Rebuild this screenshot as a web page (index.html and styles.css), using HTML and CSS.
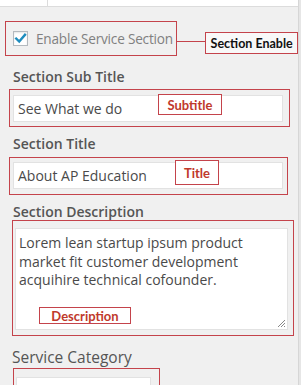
FILE: index.html
```html
<!DOCTYPE html>
<html>
<head>
<meta charset="utf-8">
<link rel="stylesheet" href="styles.css">
</head>
<body>
<div class="panel">
  <div class="topbar"><div class="topbar-cell"></div></div>

  <div class="enable-row">
    <div class="annot annot-enable">
      <span class="checkbox">
        <svg width="13" height="13" viewBox="0 0 13 13"><path d="M2.2 6.6 L5.2 9.6 L11 2.8" fill="none" stroke="#1e8cbe" stroke-width="2.4" stroke-linecap="square"/></svg>
      </span>
      <span class="enable-text">Enable Service Section</span>
    </div>
    <div class="connector"></div>
    <div class="tag tag-enable">Section Enable</div>
  </div>

  <div class="field-label label-sub">Section Sub Title</div>
  <div class="annot annot-sub">
    <div class="input">See What we do</div>
    <div class="tag tag-red tag-sub">Subtitle</div>
  </div>

  <div class="field-label label-title">Section Title</div>
  <div class="annot annot-title">
    <div class="input">About AP Education</div>
    <div class="tag tag-red tag-title">Title</div>
  </div>

  <div class="field-label label-desc">Section Description</div>
  <div class="annot annot-desc">
    <div class="textarea">Lorem lean startup ipsum product market fit customer development acquihire technical cofounder.
      <svg class="grip" width="9" height="9" viewBox="0 0 9 9"><path d="M8 1 L1 8 M8 4 L4 8 M8 7 L7 8" stroke="#888" stroke-width="1"/></svg>
    </div>
    <div class="tag tag-red tag-desc">Description</div>
  </div>

  <div class="cat-label">Service Category</div>
  <div class="annot annot-cat">
    <div class="select"></div>
  </div>
</div>
</body>
</html>
```

FILE: styles.css
```css
html {
  background: #e6e6e6;
}
body {
  margin: 0;
  font-family: "Open Sans", "Noto Sans", sans-serif;
}
.panel {
  width: 298px;
  height: 385px;
  overflow: hidden;
  background: #f0f0f0;
  border-right: 1px solid #d6d6d6;
}
.topbar {
  height: 6px;
  background: #fff;
  border-bottom: 1px solid #dcdcdc;
}
.topbar-cell {
  width: 47px;
  height: 6px;
  border-right: 1px solid #dcdcdc;
}
.annot {
  border: 1px solid #c4434b;
  position: relative;
  box-sizing: border-box;
}
.enable-row {
  display: flex;
  align-items: flex-start;
  margin: 14px 0 0 5px;
}
.annot-enable {
  width: 173px;
  height: 35px;
  display: flex;
  align-items: center;
  padding: 0 0 1px 7px;
}
.checkbox {
  width: 15px;
  height: 15px;
  box-sizing: border-box;
  border: 1px solid #b4b9be;
  background: #fff;
  box-shadow: inset 0 1px 2px rgba(0,0,0,0.1);
  display: flex;
  align-items: center;
  justify-content: center;
}
.enable-text {
  margin-left: 8px;
  font-size: 13.6px;
  color: #808080;
  letter-spacing: -0.2px;
}
.connector {
  width: 28px;
  height: 1px;
  background: #c4434b;
  margin-top: 20px;
}
.tag {
  box-sizing: border-box;
  border: 1px solid #c4434b;
  font-family: Lato, "Open Sans", sans-serif;
  font-weight: 700;
  display: flex;
  align-items: center;
  justify-content: center;
}
.tag-enable {
  width: 93px;
  height: 22px;
  margin-top: 11px;
  background: #f8f8f8;
  color: #111;
  font-size: 12.5px;
}
.tag-red {
  position: absolute;
  background: #fff;
  color: #c0392b;
  font-size: 13px;
}
.field-label {
  font-size: 14px;
  font-weight: 600;
  color: #555;
  line-height: 18px;
  padding-left: 13px;
}
.label-sub { margin-top: 12px; }
.label-title { margin-top: 8px; }
.label-desc { margin-top: 8px; }
.input {
  width: 270px;
  height: 27px;
  box-sizing: border-box;
  background: #fff;
  border: 1px solid #e2e2e2;
  font-size: 14px;
  color: #4a4a4a;
  line-height: 25px;
  padding-left: 4px;
}
.annot-sub {
  margin: 3px 0 0 9px;
  width: 281px;
  padding: 5px 6px 4px 3px;
}
.tag-sub {
  left: 148px;
  top: 4px;
  width: 64px;
  height: 21px;
}
.annot-title {
  margin: 4px 0 0 9px;
  width: 279px;
  padding: 4px 4px 5px 3px;
}
.tag-title {
  left: 165px;
  top: 2px;
  width: 44px;
  height: 25px;
}
.annot-desc {
  margin: -1px 0 0 12px;
  width: 282px;
  padding: 7px 5px 5px 2px;
}
.textarea {
  position: relative;
  width: 273px;
  height: 102px;
  box-sizing: border-box;
  background: #fff;
  border: 1px solid #e2e2e2;
  font-size: 14px;
  color: #4a4a4a;
  line-height: 18.5px;
  padding: 5px 8px 0 3px;
}
.grip {
  position: absolute;
  right: 1px;
  bottom: 1px;
}
.tag-desc {
  left: 26px;
  top: 86px;
  width: 92px;
  height: 17px;
}
.cat-label {
  margin-top: 12px;
  padding-left: 12px;
  font-size: 15.5px;
  color: #555;
  line-height: 18px;
}
.annot-cat {
  margin: 2px 0 0 13px;
  width: 147px;
  height: 40px;
  padding: 8px 0 0 2px;
}
.select {
  width: 135px;
  height: 30px;
  background: #fff;
  border: 1px solid #e2e2e2;
  box-sizing: border-box;
}
```
